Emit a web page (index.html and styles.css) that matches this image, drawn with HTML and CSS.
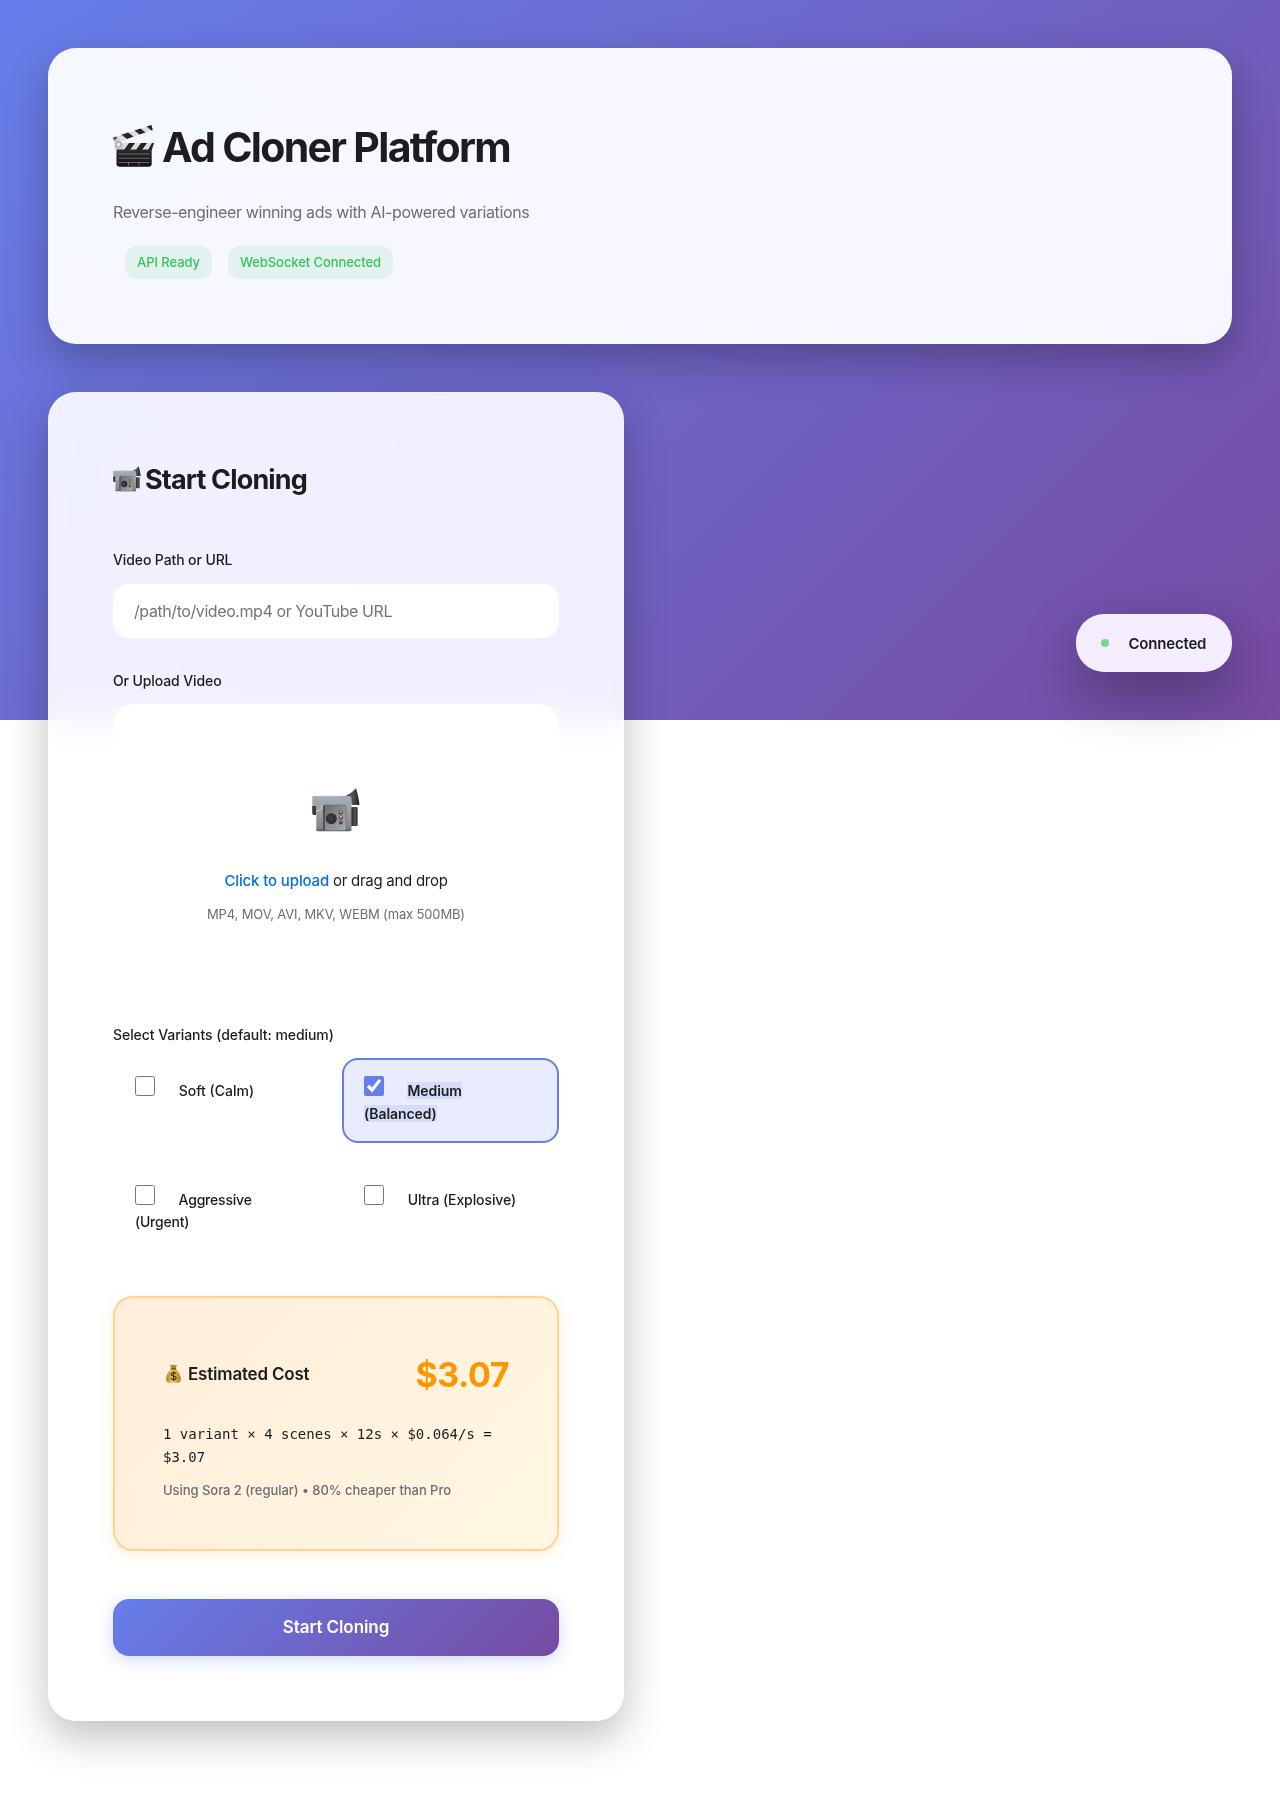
FILE: index.html
```html
<!DOCTYPE html>
<html lang="en">
<head>
<meta charset="utf-8">
<title>Ad Cloner Platform</title>
<link rel="stylesheet" href="styles.css">
</head>
<body>
<svg class="defs" width="0" height="0" aria-hidden="true">
  <defs>
    <linearGradient id="body" x1="0" y1="0" x2="0" y2="1"><stop offset="0" stop-color="#a4adb8"/><stop offset=".3" stop-color="#a0a3a8"/><stop offset=".9" stop-color="#85878b"/><stop offset="1" stop-color="#55575a"/></linearGradient>
    <linearGradient id="panel" x1="0" y1="0" x2="1" y2="1"><stop offset="0" stop-color="#66686d"/><stop offset=".5" stop-color="#8b8d92"/><stop offset="1" stop-color="#a9abaf"/></linearGradient>
    <linearGradient id="dark" x1="0" y1="0" x2="1" y2="0"><stop offset="0" stop-color="#1f2022"/><stop offset=".6" stop-color="#55575a"/><stop offset="1" stop-color="#242527"/></linearGradient>
    <linearGradient id="gold" x1="0" y1="0" x2="1" y2="0"><stop offset="0" stop-color="#a57c22"/><stop offset=".4" stop-color="#f0cf55"/><stop offset="1" stop-color="#b08325"/></linearGradient>
    <linearGradient id="slate" x1="0" y1="0" x2="0" y2="1"><stop offset="0" stop-color="#2b2b2d"/><stop offset="1" stop-color="#111113"/></linearGradient>
    <symbol id="camera" viewBox="0 0 48 44">
      <path d="M28 9.500C35 8.500 40 4.500 44 0C45.500 5 47 11 47.500 17L39.500 17L39 12Z" fill="url(#dark)"/>
      <path d="M39 19H44.500Q45.600 19 45.600 20V37Q45.600 38 44.500 38H39Z" fill="url(#dark)"/>
      <path d="M1.500 8H37Q39.500 8 39.500 11V41.500Q39.500 43.200 38 43.200H5.500Q4.300 43.200 4.300 42V26H1.500Q.3 26 .3 24V9.500Q.3 8 1.500 8Z" fill="url(#body)"/>
      <path d="M1 8.500H5L3.500 12H.5Z" fill="#8fb4d8"/>
      <path d="M5 8.300H28" stroke="#b9c2cc" stroke-width=".9"/>
      <path d="M.3 18H4V27H1.500Q.3 27 .3 25Z" fill="#443538"/>
      <path d="M4.300 23Q9 24 10.500 17" fill="none" stroke="#b9bbc0" stroke-width="1.500"/>
      <rect x="11.500" y="17" width="22.500" height="25.500" rx="1.500" fill="url(#panel)" stroke="#6a6c70" stroke-width=".6"/>
      <path d="M12 17.500V42" stroke="#3a3b3e" stroke-width="1.300"/>
      <circle cx="19.300" cy="30.700" r="5.500" fill="#303134"/>
      <circle cx="18.500" cy="30" r="3" fill="#3c3d40"/>
      <circle cx="28.800" cy="24.500" r="1.900" fill="#3a3b36"/><circle cx="28.800" cy="24" r="1.100" fill="#e0c93c"/>
      <circle cx="28.800" cy="29.500" r="1.900" fill="#3a3b3e"/><circle cx="28.800" cy="29" r="1.100" fill="#d5d6d8"/>
      <circle cx="28.800" cy="34.500" r="1.900" fill="#3a3032"/><circle cx="28.800" cy="34" r="1.200" fill="#d23c3f"/>
    </symbol>
  </defs>
</svg>

<main class="container">
  <header class="card header">
    <h1 class="title">
      <svg class="clapper" viewBox="0 0 41 42" aria-hidden="true">
        <path d="M0 12.500L38.500 0L39.800 5L3 18Z" fill="#dededf"/>
        <path d="M8.500 9.700L15 7.600L20.500 11.600L14 13.900ZM21.500 5.500L27.500 3.600L32.500 7.500L26.500 9.600ZM33.500 1.600L38.500 0L39.800 5L38.500 5.500Z" fill="#29292b"/>
        <path d="M0 12.500L3.500 11.400L4 14L1 16Z" fill="#4a4a4c"/>
        <path d="M3.500 18H41L38.700 25H3.500Z" fill="#dededf"/>
        <path d="M11 25L16 18H22L17 25ZM23 25L28 18H34L29 25ZM35 25L39 18H41L38.700 25Z" fill="#222224"/>
        <path d="M1.500 14Q8 14 10.500 20L9 24.500H2Z" fill="#c4c5c7"/>
        <circle cx="5.500" cy="19.500" r="2.500" fill="#e8e8e8" stroke="#77787a" stroke-width=".6"/>
        <path d="M3.500 24.500H38.700V38.500Q38.700 41.800 35.500 41.800H7Q3.500 41.800 3.500 38.500Z" fill="url(#slate)"/>
        <path d="M5.500 29H36.500M5.500 33.300H36.500M5.500 37.500H36.500M15.500 37.500V40.500M26 37.500V40.500" stroke="#8a8a8c" stroke-width=".7"/>
      </svg>
      <span>Ad Cloner Platform</span>
    </h1>
    <p class="subtitle">Reverse-engineer winning ads with AI-powered variations</p>
    <div class="badges">
      <span class="badge">API Ready</span>
      <span class="badge">WebSocket Connected</span>
    </div>
  </header>

  <section class="card form">
    <h2 class="form-title"><svg class="camera-small" aria-hidden="true"><use href="#camera"/></svg><span>Start Cloning</span></h2>

    <label class="label" for="video">Video Path or URL</label>
    <input class="input" id="video" type="text" placeholder="/path/to/video.mp4 or YouTube URL">

    <div class="label">Or Upload Video</div>
    <div class="upload">
      <svg class="camera-large" aria-hidden="true"><use href="#camera"/></svg>
      <p class="upload-text"><span class="upload-link">Click to upload</span> or drag and drop</p>
      <p class="upload-hint">MP4, MOV, AVI, MKV, WEBM (max 500MB)</p>
    </div>

    <div class="label label-variants">Select Variants (default: medium)</div>
    <div class="variants">
      <label class="variant variant-soft"><input type="checkbox"> <span>Soft (Calm)</span></label>
      <label class="variant selected"><input type="checkbox" checked> <span>Medium<br>(Balanced)</span></label>
      <label class="variant variant-aggressive"><input type="checkbox"> <span>Aggressive<br>(Urgent)</span></label>
      <label class="variant"><input type="checkbox"> <span>Ultra (Explosive)</span></label>
    </div>

    <div class="cost">
      <div class="cost-head">
        <h3 class="cost-title">
          <svg class="bag" viewBox="0 0 15 19" aria-hidden="true">
            <path d="M4 .8Q5.500 1.600 7.500 .6Q9.500 1.600 11 .8L9.600 5H5.400Z" fill="#b38a35"/>
            <path d="M5.200 5H9.800C12.500 7.500 15 11.500 14.800 15.500C14.700 18 13.500 18.800 11 18.800H4C1.500 18.800 .3 18 .2 15.500C0 11.500 2.500 7.500 5.200 5Z" fill="url(#gold)"/>
            <path d="M4.800 4.900H10.200" stroke="#7c4b1c" stroke-width="1.400"/>
            <path d="M10 9.700Q9.300 8.600 7.500 8.600Q5.100 8.700 5.200 10.400Q5.300 11.700 7.500 12Q10 12.400 10 14Q9.900 15.700 7.500 15.700Q5.500 15.700 4.900 14.300M7.500 7.300V17" fill="none" stroke="#3f3a24" stroke-width="1.200"/>
          </svg>
          <span>Estimated Cost</span>
        </h3>
        <span class="price">$3.07</span>
      </div>
      <p class="formula">1 variant × 4 scenes × 12s × $0.064/s = $3.07</p>
      <p class="cost-note">Using Sora 2 (regular) • 80% cheaper than Pro</p>
    </div>

    <button class="submit" type="button">Start Cloning</button>
  </section>
</main>

<div class="status"><span class="dot"></span><span>Connected</span></div>
</body>
</html>
```
FILE: styles.css
```css
* { box-sizing: border-box; margin: 0; padding: 0; }

html { background: #fff; }

body {
  min-height: 1801px;
  background: linear-gradient(135deg, #667eea 0%, #764ba2 100%) 0 0 / 100% 720px no-repeat;
  font-family: Inter, "Liberation Sans", sans-serif;
  color: #1d1d1f;
  position: relative;
}

.defs { position: absolute; }

.container {
  padding: 48px;
  display: flex;
  flex-direction: column;
  gap: 48px;
}

.card {
  border: 1px solid rgba(255, 255, 255, .2);
  border-radius: 28px;
  padding: 64px;
  box-shadow: 0 16px 40px rgba(0, 0, 0, .25);
  -webkit-backdrop-filter: blur(20px) saturate(180%);
  backdrop-filter: blur(20px) saturate(180%);
}

.header { height: 296px; background: rgba(255, 255, 255, .95); }

.title {
  display: flex;
  align-items: center;
  gap: 8px;
  height: 68px;
  font-size: 41px;
  line-height: 68px;
  font-weight: 700;
  letter-spacing: -1.68px;
}

.clapper { width: 41px; height: 42px; flex: none; margin-top: -2px; }

.subtitle {
  margin-top: 18px;
  font-size: 16px;
  line-height: 27px;
  letter-spacing: -.39px;
  color: #6e6e73;
}

.badges { display: flex; gap: 16px; margin: 20px 0 0 12px; }

.badge {
  height: 33px;
  padding: 0 12px;
  border-radius: 12px;
  background: rgba(52, 199, 89, .1);
  color: #34c759;
  font-size: 13px;
  line-height: 33px;
  font-weight: 500;
  letter-spacing: -.07px;
}

.form { width: 576px; background: rgba(255, 255, 255, .9); }

.form-title {
  display: flex;
  align-items: center;
  gap: 4px;
  height: 44px;
  font-size: 27px;
  line-height: 44px;
  font-weight: 700;
  letter-spacing: -.85px;
  margin-bottom: 47px;
}

.form-title span { padding-top: 1px; }

.camera-small { width: 28px; height: 26px; }

.label {
  display: block;
  font-size: 14px;
  line-height: 24px;
  font-weight: 500;
  letter-spacing: -.11px;
}

.label-variants { letter-spacing: -.06px; }

.input {
  display: block;
  width: 100%;
  height: 54px;
  margin: 12px 0 31px;
  padding: 0 21px;
  border: 0;
  border-radius: 16px;
  background: #fff;
  font: 400 16px Inter, "Liberation Sans", sans-serif;
  letter-spacing: -.42px;
}

.input::placeholder { color: #757575; }

.upload {
  height: 288px;
  margin: 11px 0 31px;
  padding-top: 84px;
  border-radius: 20px;
  background: rgba(255, 255, 255, .95);
  text-align: center;
}

.camera-large { display: block; width: 48px; height: 44px; margin: 0 auto; }

.upload-text {
  margin-top: 37px;
  font-size: 15px;
  line-height: 24px;
  letter-spacing: -.28px;
}

.upload-link { color: #0071e3; font-weight: 500; letter-spacing: -.13px; }

.upload-hint {
  margin-top: 11px;
  font-size: 13px;
  line-height: 20px;
  letter-spacing: -.15px;
  color: #6e6e73;
}

.variants {
  display: grid;
  grid-template-columns: 1fr 1fr;
  gap: 24px 12px;
  margin: 11px 0 44.8px;
}

.variant {
  height: 84.6px;
  padding: 16px 20px;
  border: 2px solid transparent;
  border-radius: 16px;
  font-size: 14px;
  line-height: 22.4px;
  font-weight: 500;
  letter-spacing: -.1px;
}

.variant-soft { letter-spacing: 0; }
.variant-aggressive { letter-spacing: -.2px; }

.variant input {
  width: 20px;
  height: 20px;
  margin: 0 20px 0 0;
  vertical-align: baseline;
  accent-color: #667eea;
}

.selected {
  border-color: #667eea;
  background: rgba(102, 126, 234, .15);
  font-weight: 600;
  line-height: 23px;
  letter-spacing: -.08px;
}

.selected span { background: rgba(102, 126, 234, .15); }

.cost {
  height: 255px;
  padding: 48px;
  border: 2px solid #ffd394;
  border-radius: 20px;
  background: linear-gradient(135deg, #ffeed9, #fff7e3);
  box-shadow: 0 4px 16px rgba(255, 149, 0, .15);
}

.cost-head {
  display: flex;
  justify-content: space-between;
  align-items: center;
  height: 58px;
}

.cost-title {
  display: flex;
  align-items: center;
  gap: 7px;
  padding-left: 3px;
  margin-top: -2px;
  font-size: 17px;
  font-weight: 600;
  letter-spacing: -.2px;
}

.bag { width: 15px; height: 19px; }

.price {
  color: #ff9500;
  font-size: 34px;
  font-weight: 700;
  letter-spacing: -.5px;
}

.formula {
  margin-top: 19px;
  font: 14px/23px "DejaVu Sans Mono", monospace;
}

.cost-note {
  margin-top: 11px;
  font-size: 13px;
  line-height: 20px;
  font-weight: 500;
  letter-spacing: -.04px;
  color: #6e6e73;
}

.submit {
  display: block;
  width: 100%;
  height: 57px;
  margin-top: 48px;
  border: 0;
  border-radius: 16px;
  background: linear-gradient(135deg, #667eea 0%, #764ba2 100%);
  box-shadow: 0 4px 16px rgba(102, 126, 234, .3);
  color: #fff;
  font: 600 17px Inter, "Liberation Sans", sans-serif;
  letter-spacing: -.08px;
}

/* Floating connection pill */
.status {
  position: absolute;
  top: 614px;
  right: 48px;
  width: 156px;
  height: 58px;
  padding-left: 25px;
  display: flex;
  align-items: center;
  gap: 19.5px;
  border-radius: 28px;
  background: rgba(247, 241, 255, .98);
  box-shadow: 0 20px 56px rgba(0, 0, 0, .33);
  font-size: 15px;
  font-weight: 600;
  letter-spacing: -.2px;
}

.dot { width: 8px; height: 8px; border-radius: 50%; background: #7ad693; }
```
